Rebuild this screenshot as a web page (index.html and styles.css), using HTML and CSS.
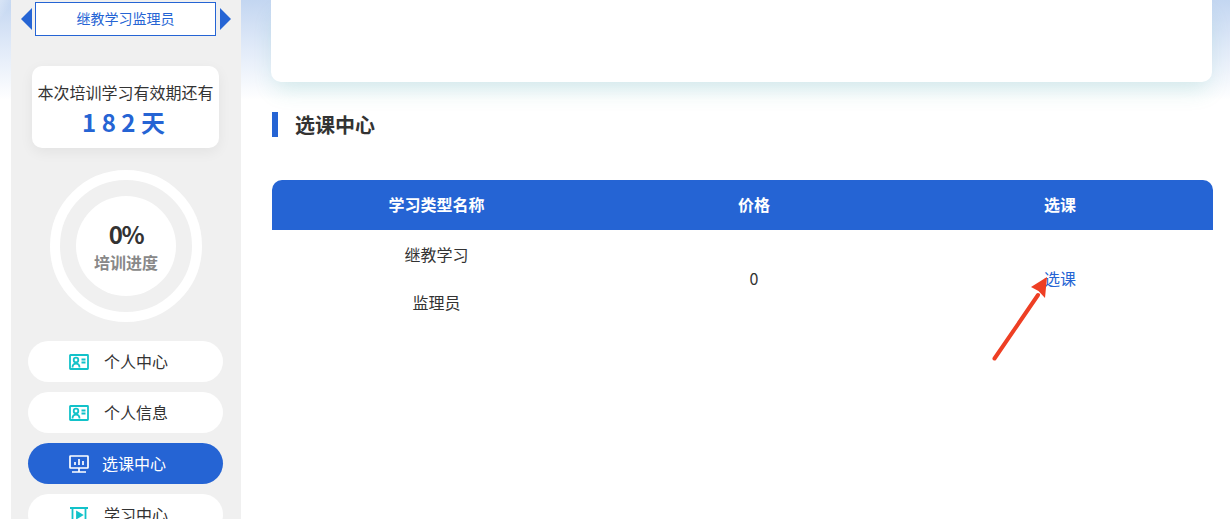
FILE: index.html
```html
<!DOCTYPE html>
<html lang="zh-CN">
  <head>
    <meta charset="UTF-8" />
    <title>选课中心</title>
    <link rel="stylesheet" href="styles.css">
  </head>
  <body>
    <div class="page">
      <div class="sidebar">
        <div class="switcher">
          <span class="switcher-prev"></span>
          <div class="switcher-name">继教学习监理员</div>
          <span class="switcher-next"></span>
        </div>
        <div class="remain-card">
          <p class="remain-label">本次培训学习有效期还有</p>
          <p class="remain-days">1 8 2 天</p>
        </div>
        <div class="progress-ring">
          <div class="progress-inner">
            <span class="progress-num">0%</span>
            <span class="progress-label">培训进度</span>
          </div>
        </div>
        <div class="menu">
          <a class="menu-item">
            <svg class="menu-icon" viewBox="0 0 20 16" fill="none" stroke="#12c2c9" stroke-width="1.8">
              <rect x="1" y="1" width="18" height="14" rx="0.5" />
              <circle cx="7" cy="6" r="2.3" />
              <path d="M3.5 13.5c0-2.6 1.5-3.8 3.5-3.8s3.5 1.2 3.5 3.8" />
              <path d="M12.5 5.5h4M12.5 8.5h4" />
            </svg>
            <span class="menu-text">个人中心</span>
          </a>
          <a class="menu-item">
            <svg class="menu-icon" viewBox="0 0 20 16" fill="none" stroke="#12c2c9" stroke-width="1.8">
              <rect x="1" y="1" width="18" height="14" rx="0.5" />
              <circle cx="7" cy="6" r="2.3" />
              <path d="M3.5 13.5c0-2.6 1.5-3.8 3.5-3.8s3.5 1.2 3.5 3.8" />
              <path d="M12.5 5.5h4M12.5 8.5h4" />
            </svg>
            <span class="menu-text">个人信息</span>
          </a>
          <a class="menu-item menu-item-active">
            <svg class="menu-icon menu-icon-board" viewBox="0 0 20 18" fill="none" stroke="#fff" stroke-width="1.7">
              <rect x="1" y="1" width="18" height="12" rx="0.5" />
              <path d="M6 10V7M10 10V4M14 10V6" />
              <path d="M10 13v4M3 17h14" />
            </svg>
            <span class="menu-text">选课中心</span>
          </a>
          <a class="menu-item">
            <svg class="menu-icon" viewBox="0 0 20 16" fill="none" stroke="#12c2c9" stroke-width="1.8">
              <path d="M1 1h18M3.5 1v14h13V1M3.5 15h13" />
              <path d="M8 5l5 3-5 3z" fill="#12c2c9" />
            </svg>
            <span class="menu-text">学习中心</span>
          </a>
        </div>
      </div>

      <div class="main">
        <div class="top-card"></div>
        <h2 class="section-title">选课中心</h2>
        <table class="course-table">
          <tr>
            <th class="col-name">学习类型名称</th>
            <th class="col-price">价格</th>
            <th class="col-action">选课</th>
          </tr>
          <tr>
            <td>
              <p>继教学习</p>
              <p>监理员</p>
            </td>
            <td>0</td>
            <td><a class="course-link">选课</a></td>
          </tr>
        </table>
      </div>
    </div>

    <!-- red annotation arrow on top of the screenshot -->
    <svg class="annotation" viewBox="0 0 70 90" fill="none">
      <path d="M4.5 86.5L48 23" stroke="#ee3f24" stroke-width="4" stroke-linecap="round" />
      <path d="M57 5L41 15L48.5 19L55 26z" fill="#ee3f24" />
    </svg>
  </body>
</html>
```

FILE: styles.css
```css
* {
  margin: 0;
  padding: 0;
  box-sizing: border-box;
  font-family: "Noto Sans CJK SC", "Noto Sans", sans-serif;
}

html,
body {
  height: 519px;
  overflow: hidden;
}

body {
  position: relative;
  color: #333;
  background-color: #fff;
}

.page {
  display: flex;
  height: 519px;
  padding-left: 11px;
  background:
    linear-gradient(125deg, rgba(255, 255, 255, 0.35) 0, rgba(255, 255, 255, 0) 12px),
    linear-gradient(180deg, #c3d6f1 0, #dfe9f8 45px, #fff 100px);
}

.sidebar {
  width: 230px;
  height: 519px;
  flex-shrink: 0;
  background-color: #f0f0f0;
  padding-top: 2px;
}

.switcher {
  display: flex;
  align-items: center;
  margin-left: 10px;
  height: 34px;
}

.switcher-prev,
.switcher-next {
  width: 0;
  height: 0;
  border-top: 11px solid transparent;
  border-bottom: 11px solid transparent;
}

.switcher-prev {
  border-right: 11px solid #2564d4;
}

.switcher-next {
  border-left: 11px solid #2564d4;
}

.switcher-name {
  width: 181px;
  height: 34px;
  margin: 0 4px 0 3px;
  border: 1px solid #2564d4;
  background-color: #fff;
  color: #2564d4;
  font-size: 14px;
  line-height: 31px;
  text-align: center;
}

.remain-card {
  width: 187px;
  height: 82px;
  margin: 30px 0 0 21px;
  padding-top: 14px;
  background-color: #fff;
  border-radius: 10px;
  box-shadow: 0 4px 14px rgba(0, 0, 0, 0.06);
  text-align: center;
}

.remain-label {
  font-size: 16px;
  line-height: 24px;
}

.remain-days {
  padding-right: 4px;
  color: #2564d4;
  font-size: 24px;
  font-weight: 700;
  line-height: 36px;
}

.progress-ring {
  display: flex;
  align-items: center;
  justify-content: center;
  width: 152px;
  height: 152px;
  margin: 22px 0 0 39px;
  border: 10px solid #fff;
  border-radius: 50%;
}

.progress-inner {
  display: flex;
  flex-direction: column;
  align-items: center;
  justify-content: center;
  width: 100px;
  height: 100px;
  border-radius: 50%;
  background-color: #fff;
}

.progress-num {
  padding-top: 2px;
  font-size: 24px;
  font-weight: 700;
  letter-spacing: -1.5px;
  line-height: 30px;
}

.progress-label {
  color: #888;
  font-size: 16px;
  font-weight: 700;
  line-height: 26px;
}

.menu {
  display: flex;
  flex-direction: column;
  gap: 10px;
  margin: 19px 0 0 17px;
}

.menu-item {
  display: flex;
  align-items: center;
  width: 195px;
  height: 41px;
  padding-left: 41px;
  background-color: #fff;
  border-radius: 21px;
  color: #333;
  font-size: 16px;
}

.menu-item-active {
  background-color: #2564d4;
  color: #fff;
}

.menu-icon {
  width: 20px;
  height: 16px;
  margin-right: 15px;
}

.menu-icon-board {
  height: 18px;
  margin-right: 13px;
}

.menu-text {
  padding-bottom: 2px;
}

.main {
  width: 941px;
  margin-left: 30px;
}

.top-card {
  width: 941px;
  height: 82px;
  background-color: #fff;
  border-radius: 0 0 10px 10px;
  box-shadow: 0 12px 22px -4px rgba(40, 160, 140, 0.16);
}

.section-title {
  height: 25px;
  margin: 30px 0 0 1px;
  padding-left: 17px;
  border-left: 6px solid #2564d4;
  font-size: 20px;
  font-weight: 700;
  line-height: 25px;
}

.course-table {
  width: 941px;
  margin: 43px 0 0 1px;
  border-collapse: separate;
  border-spacing: 0;
  table-layout: fixed;
}

.course-table th {
  height: 50px;
  padding-bottom: 2px;
  background-color: #2564d4;
  color: #fff;
  font-size: 16px;
  font-weight: 700;
}

.course-table td {
  font-size: 16px;
  line-height: 48px;
  text-align: center;
}

.col-name {
  width: 329px;
  border-radius: 10px 0 0 0;
}

.col-price {
  width: 306px;
}

.col-action {
  border-radius: 0 10px 0 0;
}

.course-link {
  color: #2564d4;
}

.annotation {
  position: absolute;
  left: 990px;
  top: 272px;
  width: 70px;
  height: 90px;
}
```
